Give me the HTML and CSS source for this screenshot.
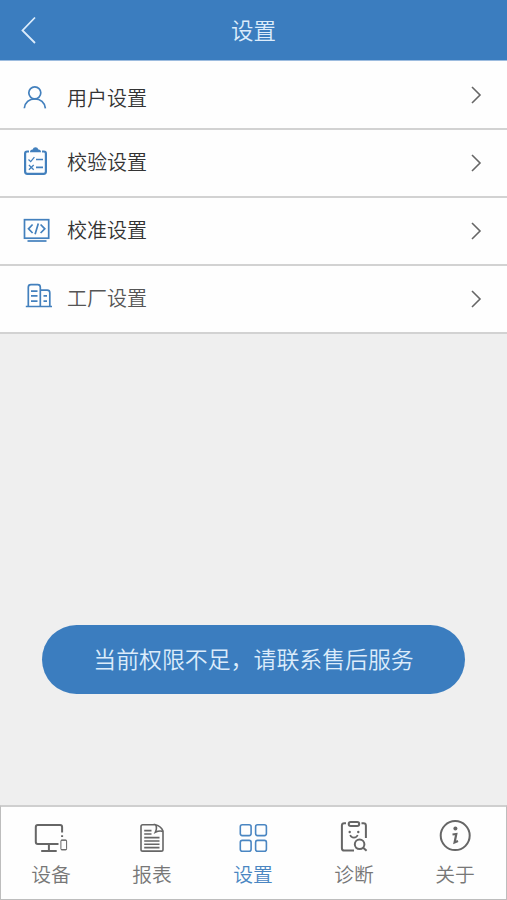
FILE: index.html
```html
<!DOCTYPE html>
<html lang="zh-CN">
<head>
    <meta charset="UTF-8">
    <meta name="viewport" content="width=device-width, initial-scale=1.0">
    <title>设置</title>
    <link rel="stylesheet" href="styles.css">
</head>
<body>
    <header class="header">
        <svg class="back" viewBox="0 0 18 30"><path d="M16 2.500 L3.500 15.500 L16 28"/></svg>
        <h1>设置</h1>
    </header>

    <ul class="list">
        <li class="row row-user">
            <svg class="icon" viewBox="0 0 34 34">
                <circle cx="14.800" cy="14.800" r="6"/>
                <path d="M4.300 30.300 C4.800 24.500 9.200 20.900 14.800 20.900 S24.800 24.500 25.400 30.300"/>
            </svg>
            <span>用户设置</span>
            <svg class="arrow" viewBox="0 0 12 20"><path d="M2 2 L10 10 L2 18"/></svg>
        </li>
        <li class="row row-check">
            <svg class="icon" viewBox="0 0 34 34">
                <path class="bold" d="M9 5.500 H7.200 Q5.100 5.500 5.100 7.600 V25.600 Q5.100 27.900 7.400 27.900 H23.600 Q25.900 27.900 25.900 25.600 V7.600 Q25.900 5.500 23.800 5.500 H22"/>
                <path class="solid" d="M10 6.300 Q10 3.800 12.600 3.600 Q13.300 1.200 15.500 1.200 T18.400 3.600 Q21 3.800 21 6.300 Z"/>
                <path class="thin" d="M8.500 13.500 L10.700 15.600 L14.400 11.200 M8.900 19 L13.700 23.700 M13.700 19 L8.900 23.700"/>
                <path d="M16 13.500 H23 M16 21.400 H23"/>
            </svg>
            <span>校验设置</span>
            <svg class="arrow" viewBox="0 0 12 20"><path d="M2 2 L10 10 L2 18"/></svg>
        </li>
        <li class="row row-calibrate">
            <svg class="icon" viewBox="0 0 34 34">
                <rect x="4.500" y="5.700" width="24.200" height="18.500"/>
                <path d="M12.600 10.500 L8.500 14.800 L12.600 19 M20.600 10.500 L24.800 14.800 L20.600 19 M18.300 9.500 L15.100 20.300"/>
                <path d="M7.500 27 H26.500"/>
            </svg>
            <span>校准设置</span>
            <svg class="arrow" viewBox="0 0 12 20"><path d="M2 2 L10 10 L2 18"/></svg>
        </li>
        <li class="row row-factory">
            <svg class="icon" viewBox="0 0 34 34">
                <path d="M8.300 24.300 V5.200 Q8.300 2.600 10.900 2.600 H17.700 Q20.300 2.600 20.300 5.200 V24.300 M20.300 8.200 H27.200 Q29.800 8.200 29.800 10.800 V24.300"/>
                <path d="M5.800 24.500 H32 M11 9.200 H17.500 M11 13.800 H17.500 M11 19.100 H17.500 M23.500 13.800 H27 M23.500 19.100 H27"/>
            </svg>
            <span>工厂设置</span>
            <svg class="arrow" viewBox="0 0 12 20"><path d="M2 2 L10 10 L2 18"/></svg>
        </li>
    </ul>

    <main class="content">
        <div class="toast">当前权限不足，请联系售后服务</div>
    </main>

    <nav class="tabs">
        <a class="tab">
            <svg viewBox="0 0 36 36">
                <path class="heavy" d="M28.100 14.500 V9.100 Q28.100 7.100 26.100 7.100 H3.800 Q1.800 7.100 1.800 9.100 V24 Q1.800 26 3.800 26 H24.500 M14.900 26 V33 M7.200 33 H22.700 M28.100 17.200 V18.900"/>
                <rect class="thin" x="26.900" y="22" width="5.700" height="9.900" rx="1"/>
                <path class="thin" d="M27 22.300 H32.500 M27 31.600 H32.500"/>
            </svg>
            <span>设备</span>
        </a>
        <a class="tab">
            <svg viewBox="0 0 36 36">
                <path d="M20.500 6.700 H7.700 Q6 6.700 6 8.400 V31.400 Q6 33.100 7.700 33.100 H26.300 Q28 33.100 28 31.400 V13 Q26 8 20.500 6.700 Q22.500 9.500 20.300 14.300 Q24.500 12.200 28 13.500"/>
                <path d="M9.200 12.600 H16.500 M9.200 16 H16.500 M9.200 19.600 H24.500 M9.200 23 H24.500 M9.200 26.300 H24.500 M9.200 29.600 H24.500"/>
            </svg>
            <span>报表</span>
        </a>
        <a class="tab active">
            <svg viewBox="0 0 36 36">
                <rect x="4.300" y="6.800" width="10.800" height="10.800" rx="2"/>
                <rect x="19.600" y="6.800" width="10.800" height="10.800" rx="2"/>
                <rect x="4.300" y="22.400" width="10.800" height="10.800" rx="2"/>
                <rect x="19.600" y="22.400" width="10.800" height="10.800" rx="2"/>
            </svg>
            <span>设置</span>
        </a>
        <a class="tab">
            <svg viewBox="0 0 36 36">
                <path class="heavy" d="M9 5.200 H7.300 Q4.900 5.200 4.900 7.600 V30.200 Q4.900 32.600 7.300 32.600 H17 M24.500 5.200 H26.500 Q28.900 5.200 28.900 7.600 V20"/>
                <rect class="heavy" x="11.700" y="4" width="10.500" height="4" rx="2"/>
                <path d="M13.200 17 Q14 19.600 16.900 19.600 T20.700 17"/>
                <circle class="dot" cx="12.700" cy="14" r="1.200"/>
                <circle class="dot" cx="21.300" cy="14" r="1.200"/>
                <circle class="heavy" cx="22.600" cy="26.300" r="4.800"/>
                <path class="heavy" d="M26.200 29.700 L29.600 32.800"/>
            </svg>
            <span>诊断</span>
        </a>
        <a class="tab">
            <svg viewBox="0 0 36 36">
                <circle class="heavy" cx="17.200" cy="17.600" r="14.500"/>
                <circle class="dot" cx="17.400" cy="10.400" r="2"/>
                <path class="stem" d="M14.500 16.500 L18.300 16 L16.600 24.500 L20 23"/>
            </svg>
            <span>关于</span>
        </a>
    </nav>
</body>
</html>
```
FILE: styles.css
```css
* {
    box-sizing: border-box;
}
body {
    margin: 0;
    height: 900px;
    display: flex;
    flex-direction: column;
    background-color: #efefef;
    font-family: "Noto Sans CJK SC", sans-serif;
    font-weight: 350;
}
svg {
    fill: none;
    stroke: currentColor;
    flex-shrink: 0;
}

/* header */
.header {
    height: 61px;
    display: grid;
    grid-template-columns: 60px 1fr 60px;
    align-items: center;
    background-color: #3b7dbf;
    border-bottom: 1px solid #9dbcdf;
    color: #dcecfb;
}
.header h1 {
    margin: 0;
    padding-bottom: 2px;
    font-size: 22.5px;
    line-height: 30px;
    font-weight: 350;
    text-align: center;
}
.back {
    width: 18px;
    height: 30px;
    margin-left: 19px;
    stroke-width: 1.8;
}

/* settings list */
.list {
    list-style: none;
    margin: 0;
    padding: 1px 0 0;
    background-color: #fefefe;
}
.row {
    height: 68px;
    display: flex;
    align-items: center;
    padding: 0 25px 0 20px;
    border-bottom: 2px solid #d2d2d2;
    color: #333;
    font-size: 20px;
    line-height: 30px;
}
.row span {
    flex: 1;
    margin-left: 13px;
}
.row-user span {
    padding-top: 6px;
}
.row-check span,
.row-calibrate span {
    padding-bottom: 2px;
}
.row-factory span {
    padding-bottom: 2px;
    color: #555;
}
.icon {
    width: 34px;
    height: 34px;
    color: #4380bd;
    stroke-width: 1.7;
}
.icon .bold {
    stroke-width: 2.2;
}
.icon .thin {
    stroke-width: 1.3;
}
.icon .solid {
    fill: currentColor;
    stroke: none;
}
.arrow {
    width: 12px;
    height: 20px;
    color: #666;
    stroke-width: 1.6;
}

/* message */
.content {
    flex: 1;
    display: flex;
    flex-direction: column;
    justify-content: flex-end;
    padding: 0 42px 111px;
}
.toast {
    height: 69px;
    border-radius: 35px;
    background-color: #3b7dbf;
    color: #dcecfb;
    font-size: 22.9px;
    line-height: 67px;
    text-align: center;
    white-space: nowrap;
}

/* bottom tabs */
.tabs {
    height: 95px;
    display: flex;
    background-color: #fefefe;
    border: 1px solid #bdbdbd;
    border-top: 2px solid #cfcfcf;
}
.tab {
    flex: 1;
    display: flex;
    flex-direction: column;
    align-items: center;
    padding-top: 11px;
    color: #666;
    font-size: 19.8px;
    line-height: 28px;
}
.tab span {
    margin-top: 6px;
    margin-right: 1px;
    color: #777;
}
.tab svg {
    width: 36px;
    height: 36px;
    stroke-width: 1.6;
}
.tab .heavy {
    stroke-width: 2;
}
.tab .thin {
    stroke-width: 1;
}
.tab .dot {
    fill: currentColor;
    stroke: none;
}
.tab .stem {
    stroke-width: 2.2;
}
.tab.active,
.tab.active span {
    color: #4a86c2;
}
```
